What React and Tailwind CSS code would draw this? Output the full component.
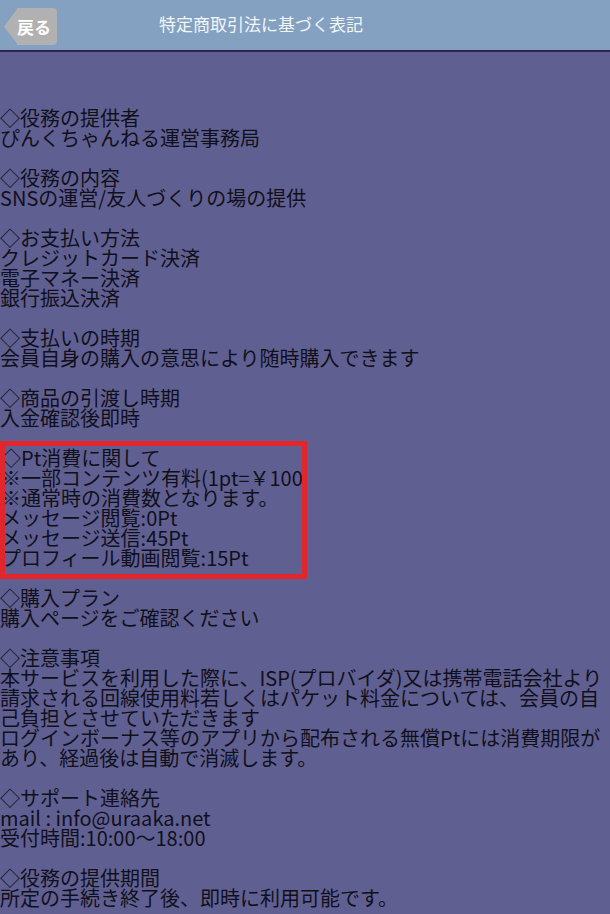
import React from "react";

const sections = [
  ["◇役務の提供者", "ぴんくちゃんねる運営事務局"],
  ["◇役務の内容", "SNSの運営/友人づくりの場の提供"],
  ["◇お支払い方法", "クレジットカード決済", "電子マネー決済", "銀行振込決済"],
  ["◇支払いの時期", "会員自身の購入の意思により随時購入できます"],
  ["◇商品の引渡し時期", "入金確認後即時"],
];

const sections2 = [
  ["◇購入プラン", "購入ページをご確認ください"],
  [
    "◇注意事項",
    "本サービスを利用した際に、ISP(プロバイダ)又は携帯電話会社より",
    "請求される回線使用料若しくはパケット料金については、会員の自",
    "己負担とさせていただきます",
    "ログインボーナス等のアプリから配布される無償Ptには消費期限が",
    "あり、経過後は自動で消滅します。",
  ],
  ["◇サポート連絡先", "mail : info@uraaka.net", "受付時間:10:00～18:00"],
  ["◇役務の提供期間", "所定の手続き終了後、即時に利用可能です。"],
];

function Section({ lines }) {
  return (
    <div className="mb-[20px]">
      {lines.map((l, i) => (
        <div key={i} className="whitespace-nowrap h-[20px]">
          {l}
        </div>
      ))}
    </div>
  );
}

export default function App() {
  const font = { fontFamily: '"Noto Sans CJK JP", "Noto Sans", sans-serif' };
  return (
    <div className="w-[610px] h-[914px] overflow-hidden bg-[#605f92]" style={font}>
      <div className="h-[52px] bg-[#84a1c1] border-b-2 border-[#2c2654] flex items-center relative">
        <div className="ml-[4px] h-[37px] mt-[3px] flex items-center">
          <svg width="14" height="37" viewBox="0 0 14 37" className="block">
            <path d="M14 0 L0 18.5 L14 37 Z" fill="#b1b1b1" />
          </svg>
          <div className="h-[37px] w-[40px] bg-[#b1b1b1] rounded-r-[4px] flex items-center text-white font-bold text-[17px] leading-none -ml-px">
            戻る
          </div>
        </div>
        <div className="ml-[102px] text-[17px] text-[#f2f5f9] leading-none mt-[-4px]">
          特定商取引法に基づく表記
        </div>
      </div>
      <div className="pt-[56px] text-[20px] leading-[20px] text-[#10101a]">
        {sections.map((s, i) => (
          <Section key={i} lines={s} />
        ))}
        <div className="w-[307px] overflow-hidden border-[5px] border-[#e3262b] -mt-[7px] pt-[2px] pb-[6px] mb-[9px]">
          <div className="-ml-[4px]">
            {[
              "◇Pt消費に関して",
              "※一部コンテンツ有料(1pt=￥100)",
              "※通常時の消費数となります。",
              "メッセージ閲覧:0Pt",
              "メッセージ送信:45Pt",
              "プロフィール動画閲覧:15Pt",
            ].map((l, i) => (
              <div key={i} className="whitespace-nowrap h-[20px]">
                {l}
              </div>
            ))}
          </div>
        </div>
        {sections2.map((s, i) => (
          <Section key={i} lines={s} />
        ))}
      </div>
    </div>
  );
}
